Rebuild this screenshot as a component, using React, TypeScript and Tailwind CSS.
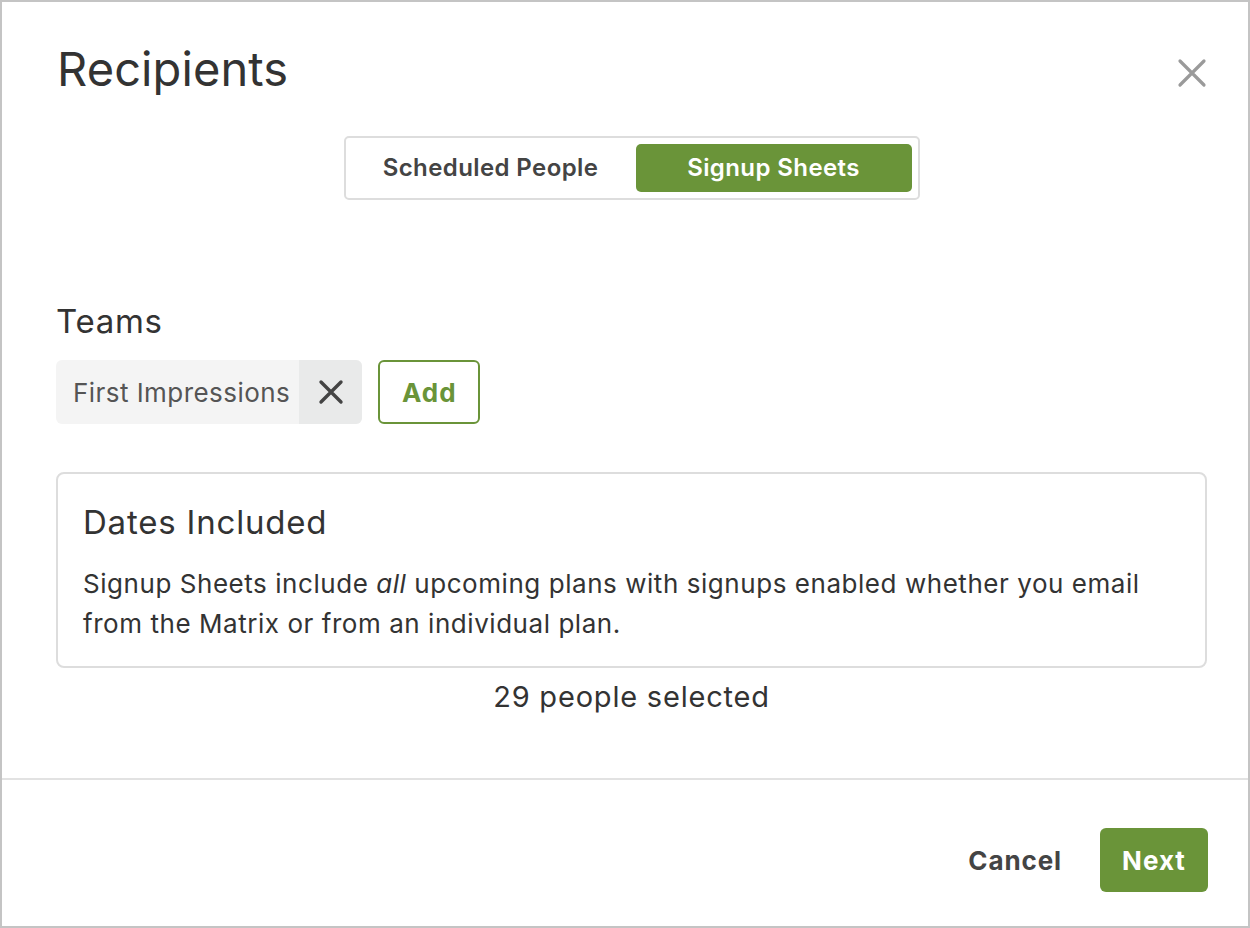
import React, { useState } from 'react';

const App: React.FC = () => {
  const [tab, setTab] = useState<'scheduled' | 'signup'>('signup');

  return (
    <div
      className="w-[1250px] h-[928px] bg-white border-2 border-[#c4c4c4] flex flex-col text-[#333]"
      style={{ fontFamily: 'Inter, "Noto Sans", sans-serif' }}
    >
      {/* header */}
      <div className="flex items-start justify-between pl-[55px] pr-[41px] pt-[37px]">
        <h1 className="text-[47px] leading-[60px] font-normal tracking-[0.1px]">Recipients</h1>
        <button className="mt-[19px] text-[#9a9a9a]">
          <svg width="30" height="30" viewBox="0 0 30 30">
            <path d="M3 3 L27 27 M27 3 L3 27" stroke="currentColor" strokeWidth="3.2" strokeLinecap="round" />
          </svg>
        </button>
      </div>

      {/* toggle */}
      <div className="flex justify-center pl-[54px] pr-[41px] mt-[37px]">
        <div className="flex border-2 border-[#dddddd] rounded-[5px] p-[6px] w-[576px] h-[64px]">
          <button
            onClick={() => setTab('scheduled')}
            className={`flex-1 pr-[6px] rounded-[5px] text-[24px] font-semibold tracking-[0.4px] ${
              tab === 'scheduled' ? 'bg-[#6a9439] text-white' : 'text-[#444]'
            }`}
          >
            Scheduled People
          </button>
          <button
            onClick={() => setTab('signup')}
            className={`w-[276px] rounded-[5px] text-[24px] font-semibold tracking-[0.4px] ${
              tab === 'signup' ? 'bg-[#6a9439] text-white' : 'text-[#444]'
            }`}
          >
            Signup Sheets
          </button>
        </div>
      </div>

      {/* body */}
      <div className="pl-[54px] pr-[41px] mt-[101px]">
        <h2 className="text-[33px] leading-[40px] font-normal tracking-[0.7px]">Teams</h2>
        <div className="flex gap-[16px] mt-[19px]">
          <div className="flex h-[64px] rounded-[6px] bg-[#f4f4f4] overflow-hidden">
            <span className="pl-[17px] pr-[9px] flex items-center text-[26px] text-[#555] tracking-[0.45px]">
              First Impressions
            </span>
            <span className="w-[63px] bg-[#e9eaea] flex items-center justify-center text-[#444]">
              <svg width="26" height="26" viewBox="0 0 26 26">
                <path d="M3 3 L23 23 M23 3 L3 23" stroke="currentColor" strokeWidth="3.4" strokeLinecap="round" />
              </svg>
            </span>
          </div>
          <button className="h-[64px] w-[102px] rounded-[6px] border-2 border-[#6a9439] text-[#6a9439] text-[26px] font-bold tracking-[1px]">
            Add
          </button>
        </div>

        <div className="mt-[48px] border-2 border-[#dddddd] rounded-[8px] px-[25px] pt-[26px] pb-[22px]">
          <h3 className="text-[33px] leading-[44px] font-normal tracking-[0.8px]">Dates Included</h3>
          <p className="mt-[20px] text-[26px] leading-[40px] tracking-[0.55px]">
            Signup Sheets include <em>all</em> upcoming plans with signups enabled whether you email from the Matrix
            or from an individual plan.
          </p>
        </div>

        <p className="text-center text-[29px] leading-[40px] mt-[9px] tracking-[0.8px]">29 people selected</p>
      </div>

      {/* footer */}
      <div className="mt-auto border-t-2 border-[#e2e2e2] flex items-center justify-end gap-[38px] pr-[40px] pt-[48px] pb-[34px]">
        <button className="text-[26px] font-bold text-[#444] tracking-[0.9px]">Cancel</button>
        <button className="h-[64px] w-[108px] rounded-[6px] bg-[#6a9439] text-white text-[26px] font-bold tracking-[1px]">
          Next
        </button>
      </div>
    </div>
  );
};

export default App;
